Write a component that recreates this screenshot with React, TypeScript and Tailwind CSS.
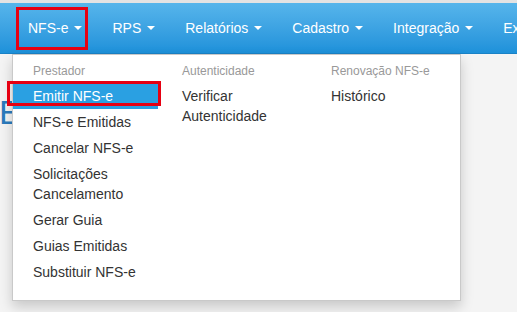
const navItems = ["NFS-e", "RPS", "Relatórios", "Cadastro", "Integração", "Exportação"];

type MenuItem = { label: string; active?: boolean };

const columns: { title: string; items: MenuItem[] }[] = [
  {
    title: "Prestador",
    items: [
      { label: "Emitir NFS-e", active: true },
      { label: "NFS-e Emitidas" },
      { label: "Cancelar NFS-e" },
      { label: "Solicitações Cancelamento" },
      { label: "Gerar Guia" },
      { label: "Guias Emitidas" },
      { label: "Substituir NFS-e" },
    ],
  },
  { title: "Autenticidade", items: [{ label: "Verificar Autenticidade" }] },
  { title: "Renovação NFS-e", items: [{ label: "Histórico" }] },
];

function Caret() {
  return (
    <span className="inline-block h-0 w-0 border-x-4 border-t-4 border-x-transparent border-t-white" />
  );
}

export default function App() {
  return (
    <div
      className="relative h-[312px] w-[517px] overflow-hidden bg-[#f4f4f4]"
      style={{ fontFamily: '"Liberation Sans", Arial, sans-serif' }}
    >
      {/* top strip */}
      <div className="h-[3px] bg-[#e3e3e3]" />

      {/* navbar */}
      <nav className="flex h-[51px] items-center whitespace-nowrap border-b border-[#1a82c6] bg-gradient-to-b from-[#56b5eb] to-[#1d91da] pl-[13px]">
        {navItems.map((item) => (
          <div key={item} className="flex items-center gap-[6px] px-[15px] text-[14px] text-white">
            <span>{item}</span>
            <Caret />
          </div>
        ))}
      </nav>

      {/* page heading, mostly hidden behind the dropdown */}
      <div className="mt-[41px] w-[12px] overflow-hidden">
        <h1 className="-ml-[1px] text-[34px] leading-none text-[#2b7bbd]">E</h1>
      </div>

      {/* dropdown */}
      <div className="absolute left-[12px] top-[54px] flex h-[247px] w-[449px] border border-[#c9c9c9] bg-white pt-[6px] shadow-[0_6px_12px_rgba(0,0,0,0.18)]">
        {columns.map((col) => (
          <div key={col.title} className="w-[149px]">
            <div className="px-[20px] text-[12px] leading-[20px] text-[#999]">{col.title}</div>
            <ul className="mt-[2px]">
              {col.items.map((it) => (
                <li
                  key={it.label}
                  className={
                    it.active
                      ? "mr-[4px] bg-[#2aa0e2] px-[20px] py-[3px] text-[14px] leading-[20px] text-white"
                      : "px-[20px] py-[3px] text-[14px] leading-[20px] text-[#333]"
                  }
                >
                  {it.label}
                </li>
              ))}
            </ul>
          </div>
        ))}
      </div>

      {/* red annotation boxes */}
      <div className="absolute left-[16px] top-[7px] h-[43px] w-[72px] border-[3px] border-[#e60012]" />
      <div className="absolute left-[7px] top-[81px] h-[25px] w-[154px] border-[3px] border-[#e60012]" />
    </div>
  );
}
